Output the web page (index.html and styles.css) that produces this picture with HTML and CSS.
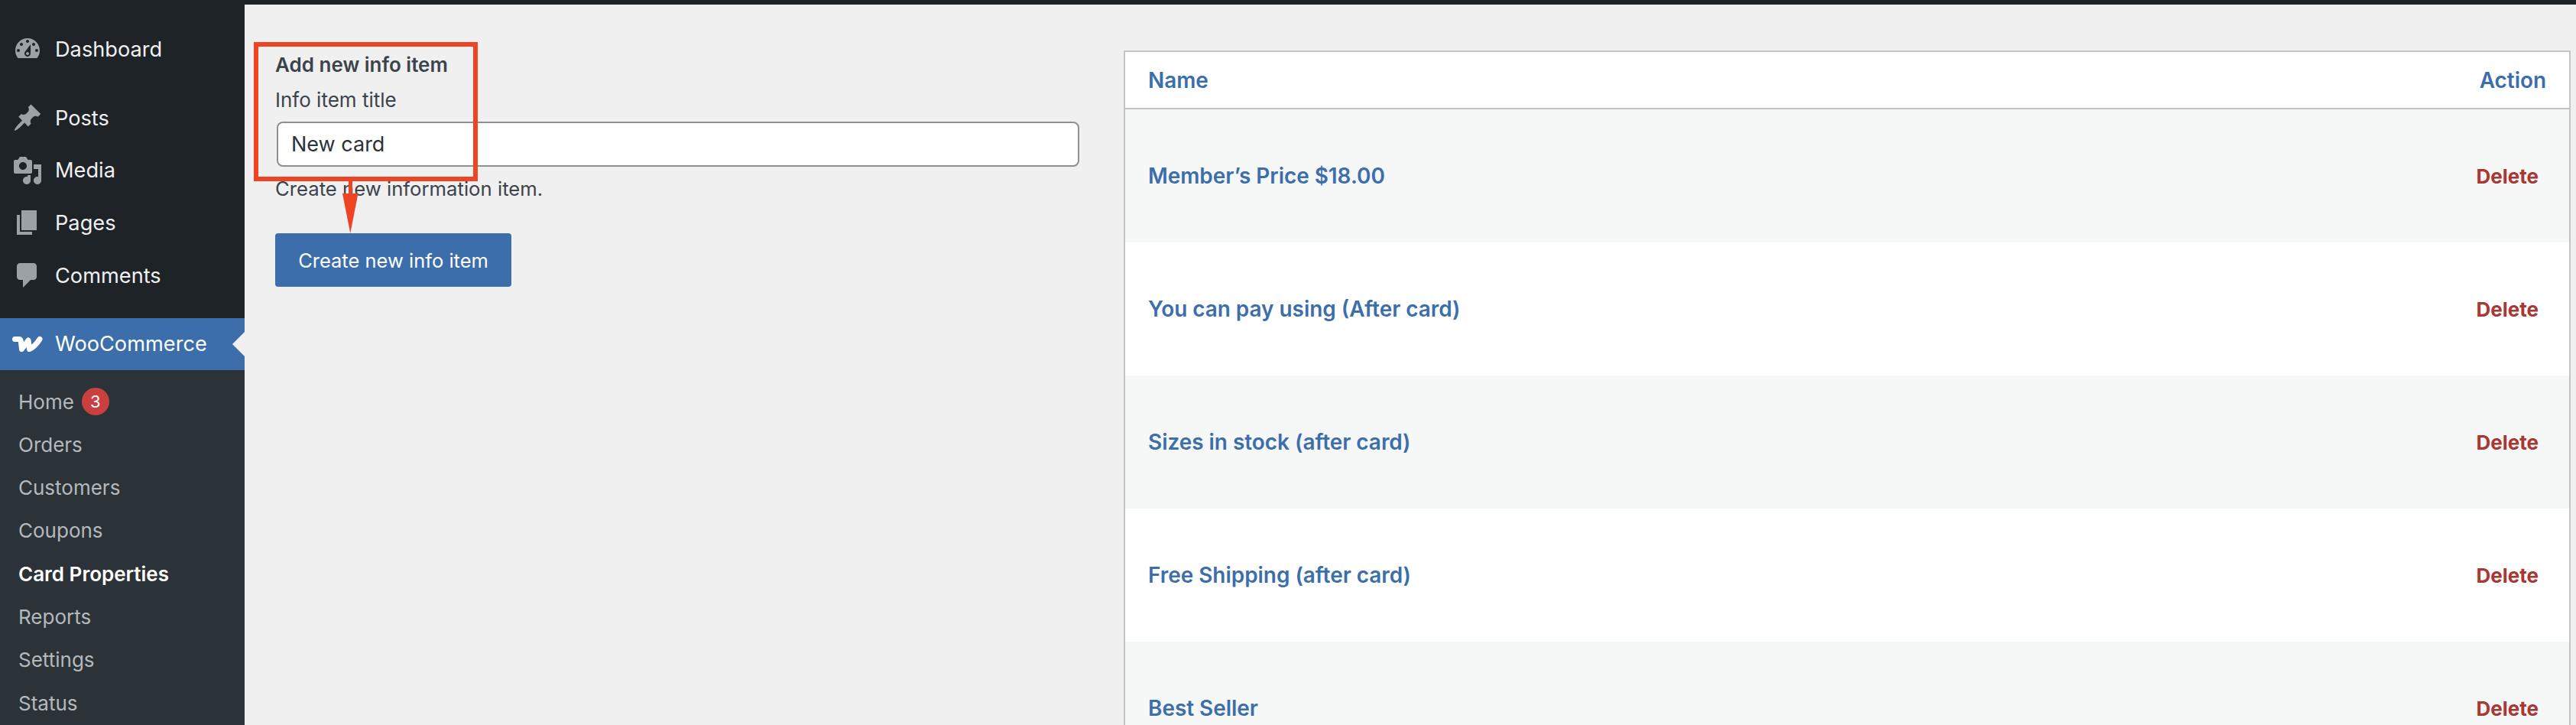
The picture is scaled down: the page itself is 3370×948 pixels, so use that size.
FILE: index.html
```html
<!DOCTYPE html>
<html lang="en">
<head>
<meta charset="utf-8">
<title>Card Properties</title>
<link rel="stylesheet" href="styles.css">
</head>
<body>
<div class="topbar"></div>
<div class="shell">
  <aside class="sidebar">
    <nav class="menu">
      <a class="item first"><svg class="icon" viewBox="0 0 20 20"><path fill-rule="evenodd" d="M3.76 16h12.48c1.1-1.37 1.76-3.11 1.76-5 0-4.42-3.58-8-8-8s-8 3.58-8 8c0 1.89.66 3.63 1.76 5zM10 4c.55 0 1 .45 1 1s-.45 1-1 1-1-.45-1-1 .45-1 1-1zM6 6c.55 0 1 .45 1 1s-.45 1-1 1-1-.45-1-1 .45-1 1-1zm8 0c.55 0 1 .45 1 1s-.45 1-1 1-1-.45-1-1 .45-1 1-1zm-5.37 5.55L12 7v6c0 1.1-.9 2-2 2s-2-.9-2-2c0-.57.24-1.08.63-1.45zM4 10c.55 0 1 .45 1 1s-.45 1-1 1-1-.45-1-1 .45-1 1-1zm12 0c.55 0 1 .45 1 1s-.45 1-1 1-1-.45-1-1 .45-1 1-1zm-5 3c0-.55-.45-1-1-1s-1 .45-1 1 .45 1 1 1 1-.45 1-1z"/></svg>Dashboard</a>
      <a class="item sep"><svg class="icon" viewBox="0 0 20 20"><path d="M10.44 3.02l1.82-1.82 6.36 6.35-1.83 1.82c-1.05-.68-2.48-.57-3.41.36l-.75.75c-.92.93-1.04 2.35-.35 3.41l-1.83 1.82-2.41-2.41-2.8 2.79c-.42.42-3.38 2.71-3.8 2.29s1.86-3.39 2.28-3.81l2.79-2.79L4.1 9.36l1.83-1.82c1.05.69 2.48.57 3.41-.36l.75-.75c.93-.92 1.04-2.35.35-3.41z"/></svg>Posts</a>
      <a class="item"><svg class="icon" viewBox="0 0 20 20"><path fill-rule="evenodd" d="M13 11V4c0-.55-.45-1-1-1h-1.67L9 1H5L3.67 3H2c-.55 0-1 .45-1 1v7c0 .55.45 1 1 1h10c.55 0 1-.45 1-1zM7 4.5c1.38 0 2.5 1.12 2.5 2.5S8.38 9.5 7 9.5 4.5 8.38 4.5 7 5.62 4.5 7 4.5zM14 6h5v10.5c0 1.38-1.12 2.5-2.5 2.5S14 17.88 14 16.5s1.12-2.5 2.5-2.5c.17 0 .34.02.5.05V9h-3V6zm-4 8.05V13h2v3.5c0 1.38-1.12 2.5-2.5 2.5S7 17.88 7 16.5 8.12 14 9.5 14c.17 0 .34.02.5.05z"/></svg>Media</a>
      <a class="item"><svg class="icon" viewBox="0 0 20 20"><path d="M6 15V2h10v13H6zm-1 1h8v2H3V5h2v11z"/></svg>Pages</a>
      <a class="item"><svg class="icon" viewBox="0 0 20 20"><path d="M5 2h9c1.1 0 2 .9 2 2v7c0 1.1-.9 2-2 2h-2l-5 5v-5H5c-1.1 0-2-.9-2-2V4c0-1.1.9-2 2-2z"/></svg>Comments</a>
      <a class="item current"><svg class="woo" viewBox="0 0 40 22"><path d="M3.500 4.500H8.500Q11 4.500 11.300 7L12.500 17.500 21 6 22.500 17.500Q29 15 36 4.500"/></svg>WooCommerce</a>
    </nav>
    <nav class="submenu">
      <a class="subitem">Home <span class="badge">3</span></a>
      <a class="subitem">Orders</a>
      <a class="subitem">Customers</a>
      <a class="subitem">Coupons</a>
      <a class="subitem active">Card Properties</a>
      <a class="subitem">Reports</a>
      <a class="subitem">Settings</a>
      <a class="subitem">Status</a>
    </nav>
  </aside>
  <main class="main">
    <section class="form">
      <h2 class="form-title">Add new info item</h2>
      <label class="form-label" for="title">Info item title</label>
      <input class="form-input" id="title" type="text" value="New card">
      <p class="form-help">Create new information item.</p>
      <button class="form-button" type="button">Create new info item</button>
    </section>
    <section class="table">
      <div class="row head"><span>Name</span><span>Action</span></div>
      <div class="row alt"><a>Member’s Price $18.00</a><a class="delete">Delete</a></div>
      <div class="row"><a>You can pay using (After card)</a><a class="delete">Delete</a></div>
      <div class="row alt"><a>Sizes in stock (after card)</a><a class="delete">Delete</a></div>
      <div class="row"><a>Free Shipping (after card)</a><a class="delete">Delete</a></div>
      <div class="row alt"><a>Best Seller</a><a class="delete">Delete</a></div>
    </section>
    <div class="callout"></div>
    <svg class="arrow" viewBox="0 0 24 70"><path d="M9 0h5v18H9z"/><path d="M1 17h20.500L11.300 69z"/></svg>
  </main>
</div>
</body>
</html>
```
FILE: styles.css
```css
* { box-sizing: border-box; }
html, body { margin: 0; height: 948px; overflow: hidden; }
body { background: #f0f0f1; font-family: Inter, "Liberation Sans", sans-serif; color: #3c434a; }
a { text-decoration: none; }

.topbar { height: 6px; background: #1d2327; }
.shell { display: flex; height: 942px; overflow: hidden; }

.sidebar { width: 320px; flex: none; background: #2c3338; display: flex; flex-direction: column; }
.menu { background: #1d2327; padding-top: 24px; }
.item { display: flex; align-items: center; height: 68.700px; padding-left: 16px; font-size: 27.200px; color: #f0f0f1; }
.item.sep { margin-top: 21px; }
.icon { width: 40px; height: 40px; margin-right: 16px; fill: #9ca1a7; flex: none; }
.woo { width: 40px; height: 22px; margin-right: 16px; fill: none; stroke: #fff; stroke-width: 7; stroke-linecap: round; stroke-linejoin: round; flex: none; }
.item.current { position: relative; margin-top: 21.500px; height: 68px; background: #3b6eaa; color: #fff; }
.item.current::after { content: ""; position: absolute; right: 0; top: 18px; border: 16px solid transparent; border-right-color: #f0f0f1; border-left-width: 0; }

.submenu { padding-top: 13px; display: flex; flex-direction: column; }
.subitem { display: flex; align-items: center; height: 56.300px; padding-left: 24px; font-size: 26px; color: #b4b9be; }
.subitem.active { color: #fff; font-weight: 600; }
.badge { width: 36px; height: 36px; margin-left: 10px; border-radius: 50%; background: #c9403f; color: #fff; font-size: 22px; display: flex; align-items: center; justify-content: center; }

.main { position: relative; flex: 1; display: flex; padding: 60px 7px 0 40px; }
.form { width: 1052px; flex: none; display: flex; flex-direction: column; align-items: flex-start; }
.form-title { margin: 0; height: 38px; font-size: 26px; line-height: 38px; font-weight: 600; color: #3c434a; }
.form-label { margin-top: 8px; font-size: 26px; line-height: 38px; }
.form-input { width: 1050px; height: 59px; margin: 9px 0 0 2px; padding: 0 17px; border: 2px solid #8c8f94; border-radius: 8px; background: #fff; font: 27px Inter, "Liberation Sans", sans-serif; color: #2c3338; }
.form-help { margin: 10px 0 0; font-size: 25.700px; line-height: 38px; }
.form-button { width: 309px; height: 70px; margin-top: 39px; border: 0; border-radius: 4px; background: #3b6eaa; color: #fff; font: 25.500px Inter, "Liberation Sans", sans-serif; }

.table { flex: 1; margin-left: 58px; height: 900px; border: 2px solid #c3c4c7; border-bottom: 0; background: #fff; display: flex; flex-direction: column; }
.row { display: flex; align-items: center; justify-content: space-between; flex: none; height: 174px; padding: 0 40px 0 30px; font-size: 27.900px; font-weight: 600; color: #3b6eaa; }
.row.alt { background: #f6f7f7; }
.row.head { height: 75px; padding-right: 30px; border-bottom: 2px solid #c3c4c7; background: #fff; }
.delete { font-size: 26px; font-weight: 700; color: #a73834; }

.callout { position: absolute; left: 12px; top: 49px; width: 293px; height: 182px; border: 6px solid #ef4423; }
.arrow { position: absolute; left: 127px; top: 230px; width: 24px; height: 70px; fill: #ef4423; }
```
